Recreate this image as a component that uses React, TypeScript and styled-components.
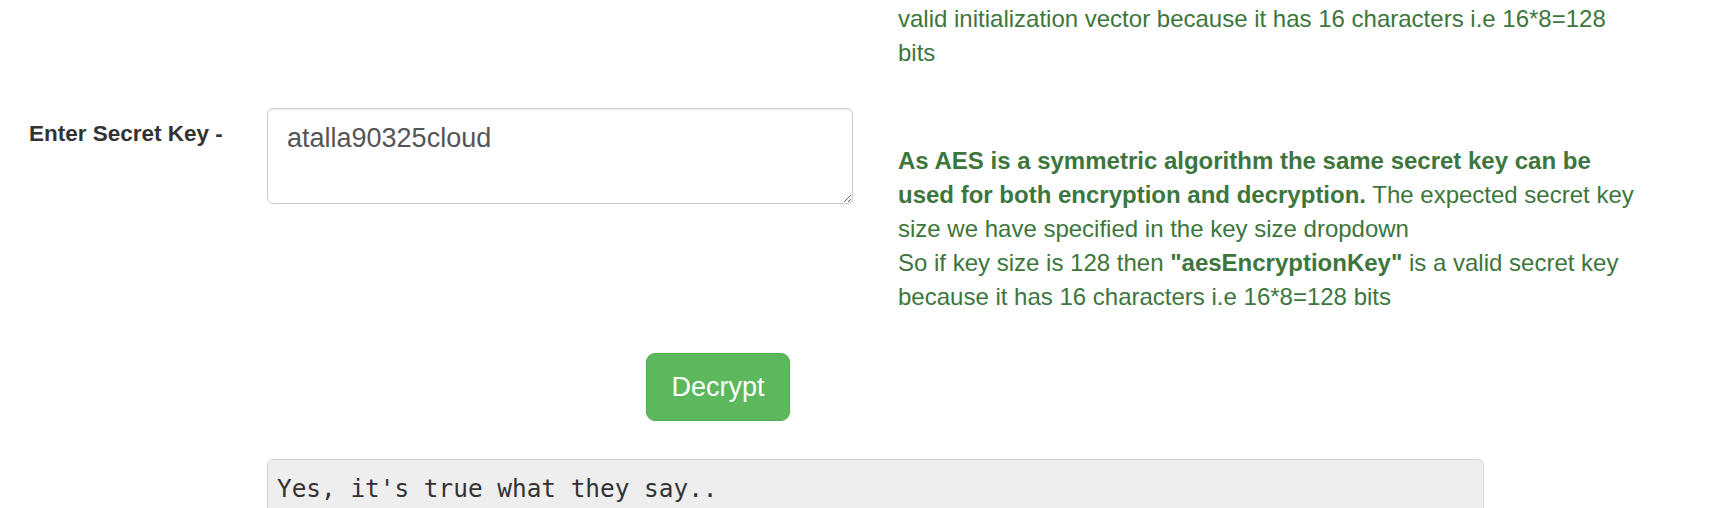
import React from "react";
import styled, { createGlobalStyle } from "styled-components";

const GlobalStyle = createGlobalStyle`
  html, body {
    margin: 0;
    padding: 0;
    background: #ffffff;
    font-family: "Liberation Sans", Arial, sans-serif;
    color: #333333;
  }
  * { box-sizing: border-box; }
`;

const Page = styled.div`
  width: 1736px;
  height: 508px;
  overflow: hidden;
  padding-left: 29px;
`;

const FormRow = styled.div<{ $top?: number }>`
  display: grid;
  grid-template-columns: 238px 586px 1fr;
  align-items: start;
  margin-top: ${(p) => p.$top ?? 0}px;
`;

const Label = styled.label`
  grid-column: 1;
  font-size: 22.5px;
  font-weight: 700;
  line-height: 32px;
  padding-top: 10px;
  color: #333333;
`;

const TextArea = styled.textarea`
  grid-column: 2;
  display: block;
  width: 586px;
  height: 96px;
  margin: 0;
  padding: 10px 19px 4px;
  font-family: "Liberation Sans", Arial, sans-serif;
  font-size: 27px;
  line-height: 38px;
  color: #555555;
  background: #ffffff;
  border: 1px solid #cccccc;
  border-radius: 6px;
  box-shadow: inset 0 1px 1px rgba(0, 0, 0, 0.075);
  outline: none;
`;

const Note = styled.div<{ $offset?: number }>`
  grid-column: 3;
  margin-left: 45px;
  padding-top: ${(p) => p.$offset ?? 0}px;
  width: 745px;
  font-size: 24px;
  line-height: 34px;
  color: #3c763d;
  b {
    font-weight: 700;
  }
`;

const ButtonRow = styled.div`
  display: flex;
  margin-top: 39px;
  padding-left: 617px;
`;

const Button = styled.button`
  width: 144px;
  height: 68px;
  padding: 0 24px;
  font-family: "Liberation Sans", Arial, sans-serif;
  font-size: 27px;
  color: #ffffff;
  background: #5cb85c;
  border: 1px solid #4cae4c;
  border-radius: 9px;
  cursor: pointer;
`;

const Output = styled.pre`
  margin: 38px 0 0 238px;
  width: 1217px;
  height: 80px;
  padding: 11px 9px;
  font-family: "DejaVu Sans Mono", "Liberation Mono", monospace;
  font-size: 24.4px;
  line-height: 35px;
  color: #333333;
  background: #eeeeee;
  border: 1px solid #d4d4d4;
  border-radius: 6px;
  white-space: pre;
`;

export default function App() {
  return (
    <>
      <GlobalStyle />
      <Page>
        <FormRow>
          <Note $offset={2}>
            valid initialization vector because it has 16 characters i.e 16*8=128 bits
          </Note>
        </FormRow>
        <FormRow $top={38}>
          <Label>Enter Secret Key -</Label>
          <TextArea defaultValue="atalla90325cloud" />
          <Note $offset={36}>
            <b>As AES is a symmetric algorithm the same secret key can be used for both encryption and decryption.</b>{" "}
            The expected secret key size we have specified in the key size dropdown
            <br />
            So if key size is 128 then <b>"aesEncryptionKey"</b> is a valid secret key because it has 16 characters i.e 16*8=128 bits
          </Note>
        </FormRow>
        <ButtonRow>
          <Button>Decrypt</Button>
        </ButtonRow>
        <Output>Yes, it's true what they say..</Output>
      </Page>
    </>
  );
}
